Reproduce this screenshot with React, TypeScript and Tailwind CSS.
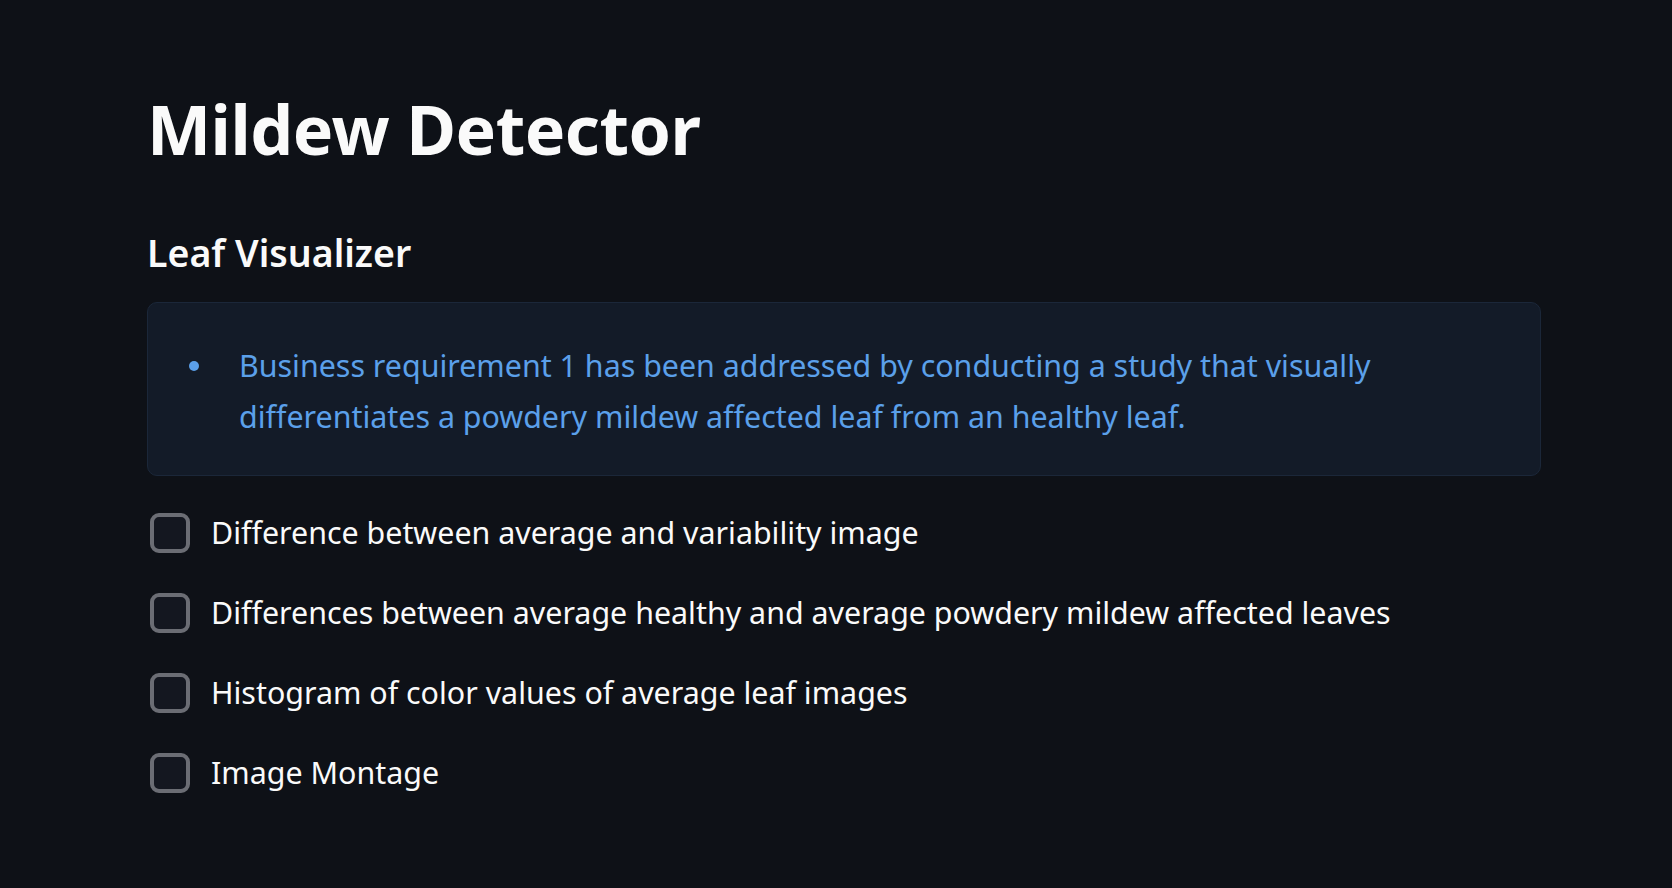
const options = [
  'Difference between average and variability image',
  'Differences between average healthy and average powdery mildew affected leaves',
  'Histogram of color values of average leaf images',
  'Image Montage',
];

function Checkbox({ label }: { label: string }) {
  return (
    <label className="flex items-center h-[40px] cursor-pointer">
      <span className="ml-[3px] w-[40px] h-[40px] shrink-0 rounded-[9px] border-[4px] border-[#6b6d74] bg-[#141720]" />
      <span className="ml-[21px] text-[30.4px] leading-[40px] text-[#fafafa]">{label}</span>
    </label>
  );
}

export default function App() {
  return (
    <div
      className="min-h-screen w-full bg-[#0e1117] text-[#fafafa]"
      style={{ fontFamily: '"Noto Sans", "Open Sans", sans-serif' }}
    >
      <div className="pl-[147px] pt-[86px] w-[1541px]">
        <h1 className="text-[68px] leading-[85px] font-bold tracking-[-0.5px]">Mildew Detector</h1>

        <h3 className="mt-[58px] text-[37.5px] leading-[48px] font-semibold">Leaf Visualizer</h3>

        <div className="mt-[25px] rounded-[10px] border border-[#1b2739] bg-[#131b28] pt-[37px] pb-[33px] pl-[41px] pr-[40px]">
          <div className="flex">
            <div className="h-[51px] w-[10px] flex items-center shrink-0">
              <span className="block w-[10px] h-[10px] rounded-full bg-[#5ba0ea]" />
            </div>
            <p className="ml-[40px] text-[30.4px] leading-[51px] text-[#5ba0ea]">
              Business requirement 1 has been addressed by conducting a study that visually differentiates a powdery
              mildew affected leaf from an healthy leaf.
            </p>
          </div>
        </div>

        <div className="mt-[37px] flex flex-col gap-[40px]">
          {options.map((o) => (
            <Checkbox key={o} label={o} />
          ))}
        </div>
      </div>
    </div>
  );
}
